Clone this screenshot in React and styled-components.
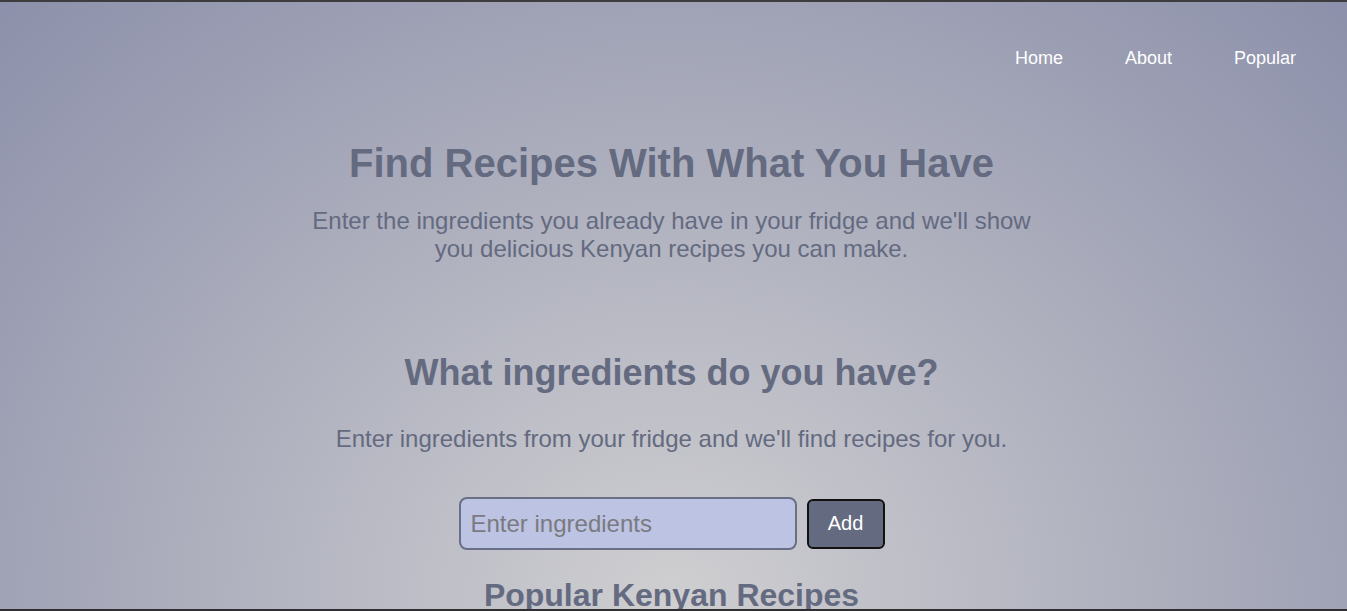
import React from "react";
import styled, { createGlobalStyle } from "styled-components";

const GlobalStyle = createGlobalStyle`
  html, body {
    margin: 0;
    padding: 0;
    height: 100%;
    overflow: hidden;
  }
  body {
    font-family: "Liberation Sans", Arial, sans-serif;
    background: radial-gradient(ellipse 952px 848px at 50% 600px, #cfcfd1 0%, #8c90aa 100%);
    background-color: #8c90aa;
    border-top: 2px solid #3d3d3f;
    box-sizing: border-box;
  }
`;

const Page = styled.div`
  min-height: 100vh;
`;

const Nav = styled.nav`
  display: flex;
  justify-content: flex-end;
  gap: 62px;
  padding: 37px 51px 0 0;
`;

const NavLink = styled.a`
  color: #ffffff;
  font-size: 18px;
  line-height: 38px;
  text-decoration: none;
`;

const Hero = styled.header`
  display: flex;
  flex-direction: column;
  align-items: center;
  text-align: center;
  padding: 63px 4px 0 0;
`;

const Title = styled.h1`
  margin: 0;
  font-size: 40px;
  font-weight: 700;
  color: #646a80;
  line-height: 46px;
`;

const Lead = styled.p`
  margin: 21px 0 0;
  max-width: 730px;
  font-size: 24px;
  line-height: 28px;
  color: #646a80;
`;

const Search = styled.section`
  display: flex;
  flex-direction: column;
  align-items: center;
  text-align: center;
  padding: 89px 4px 0 0;
`;

const Heading = styled.h2`
  margin: 0;
  font-size: 36px;
  font-weight: 700;
  line-height: 42px;
  color: #646a80;
`;

const Hint = styled.p`
  margin: 31px 0 0;
  font-size: 24px;
  line-height: 28px;
  color: #646a80;
`;

const Row = styled.form`
  display: flex;
  align-items: center;
  gap: 10px;
  margin-top: 44px;
`;

const Input = styled.input`
  box-sizing: border-box;
  width: 338px;
  height: 53px;
  padding: 0 10px;
  border: 2px solid #6a6f88;
  border-radius: 8px;
  background: #bcc3e3;
  font-family: "Liberation Sans", Arial, sans-serif;
  font-size: 24px;
  color: #333;
  outline: none;

  &::placeholder {
    color: #7a7a80;
  }
`;

const AddButton = styled.button`
  box-sizing: border-box;
  width: 78px;
  height: 50px;
  border: 2px solid #111;
  border-radius: 6px;
  background: #646a80;
  color: #fff;
  font-family: "Liberation Sans", Arial, sans-serif;
  font-size: 20px;
`;

const SectionTitle = styled.h3`
  margin: 26px 0 0;
  font-size: 32px;
  font-weight: 700;
  line-height: 38px;
  color: #646a80;
`;

const BottomEdge = styled.div`
  position: fixed;
  left: 0;
  right: 0;
  bottom: 0;
  height: 2px;
  background: #2f2e30;
`;

export default function App() {
  return (
    <Page>
      <GlobalStyle />
      <Nav>
        <NavLink href="#">Home</NavLink>
        <NavLink href="#">About</NavLink>
        <NavLink href="#">Popular</NavLink>
      </Nav>
      <Hero>
        <Title>Find Recipes With What You Have</Title>
        <Lead>
          Enter the ingredients you already have in your fridge and we'll show
          you delicious Kenyan recipes you can make.
        </Lead>
      </Hero>
      <Search>
        <Heading>What ingredients do you have?</Heading>
        <Hint>Enter ingredients from your fridge and we'll find recipes for you.</Hint>
        <Row onSubmit={(e) => e.preventDefault()}>
          <Input placeholder="Enter ingredients" />
          <AddButton type="submit">Add</AddButton>
        </Row>
        <SectionTitle>Popular Kenyan Recipes</SectionTitle>
      </Search>
      <BottomEdge />
    </Page>
  );
}
